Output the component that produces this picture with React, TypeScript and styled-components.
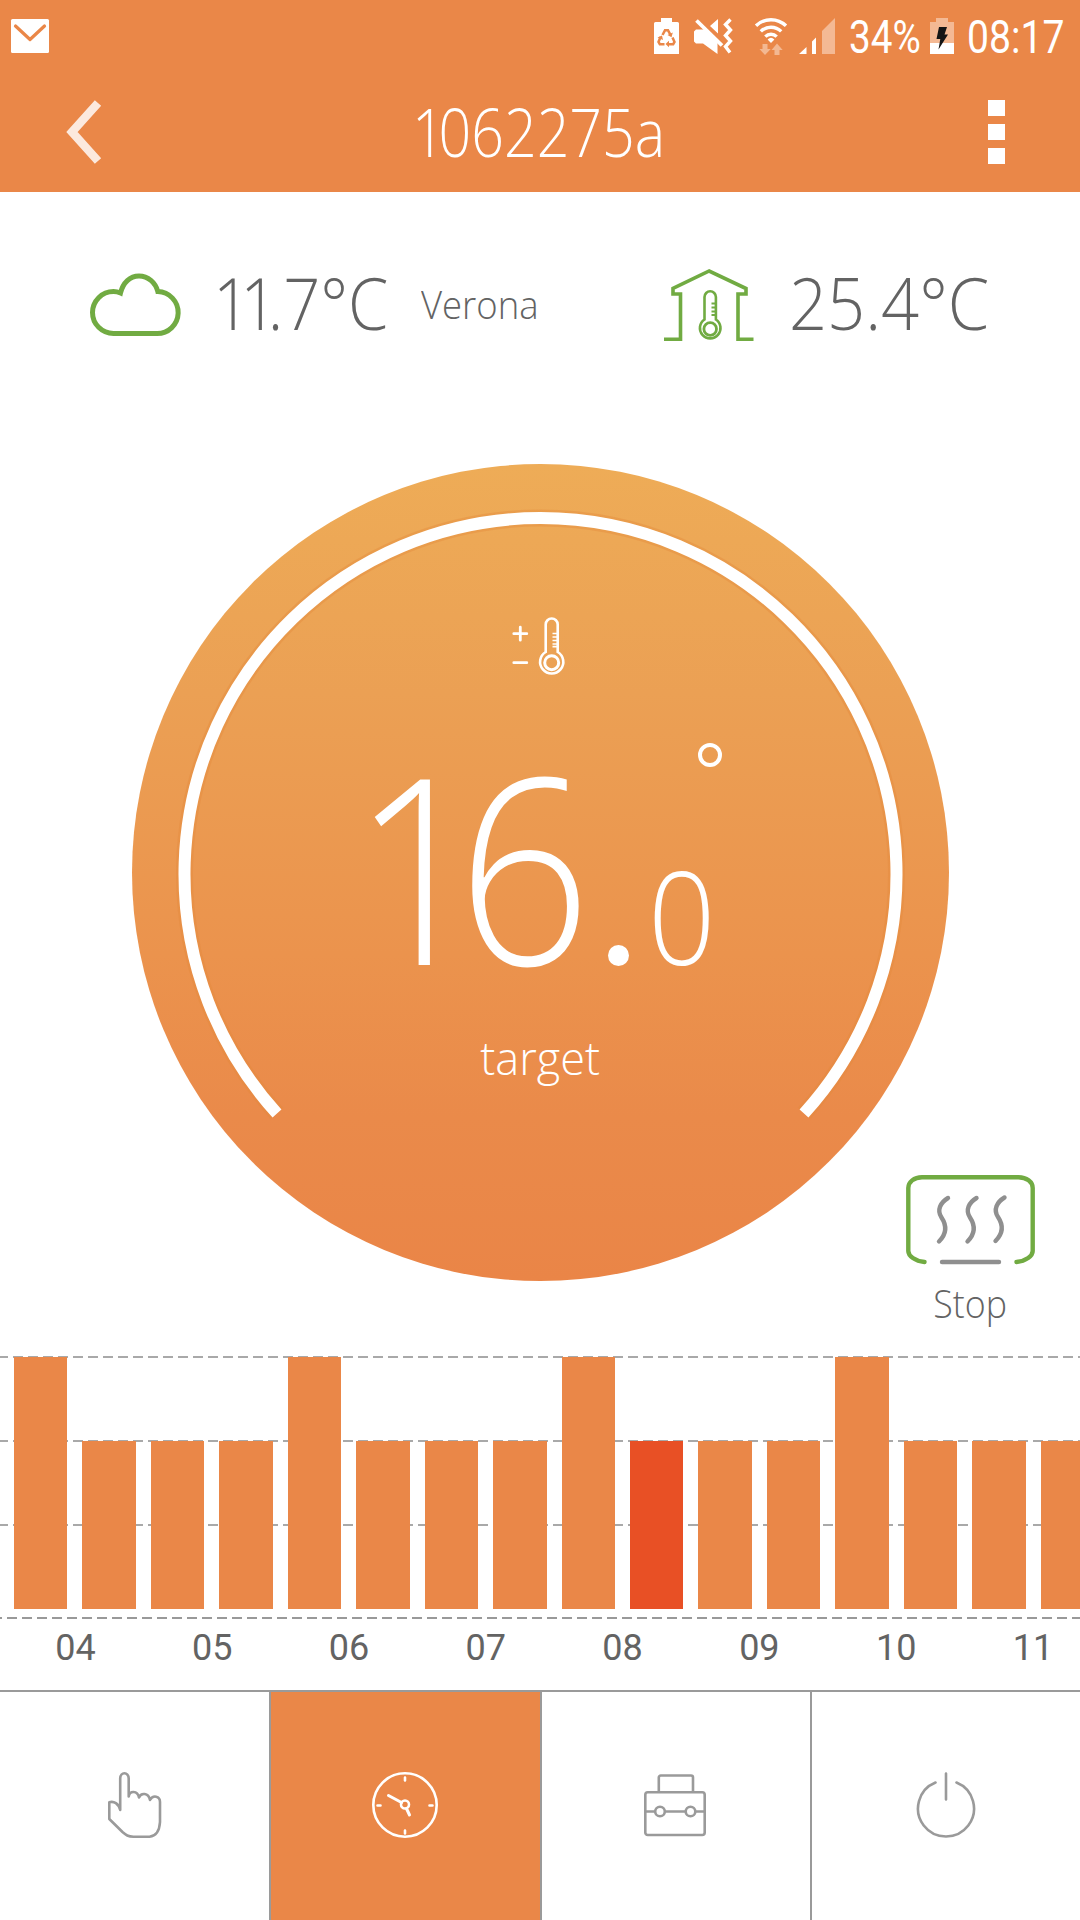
import React from "react";
import styled, { createGlobalStyle, css } from "styled-components";

const ORANGE = "#ea8748";
const RED = "#e85025";
const GREEN = "#71ab42";
const GREY = "#9a9a9a";
const INK = "#636363";

const Global = createGlobalStyle`
  *, *::before, *::after { box-sizing: border-box; }
  html, body { margin: 0; background: #fff; }
  button { border: 0; padding: 0; background: none; font: inherit; color: inherit; }
  svg { display: block; overflow: visible; }
`;

const Screen = styled.main`
  width: 1080px;
  height: 1920px;
  display: flex;
  flex-direction: column;
  overflow: hidden;
  background: #fff;
  color: ${INK};
  font-family: "Open Sans", "Noto Sans", sans-serif;
  font-weight: 300;
`;

const Text = styled.span<{ $size: number; $stretch?: number; $origin?: string }>`
  display: block;
  white-space: nowrap;
  font-size: ${(p) => p.$size}px;
  line-height: 1;
  transform: scaleX(${(p) => p.$stretch ?? 1});
  transform-origin: ${(p) => p.$origin ?? "left"} center;
`;

const One = styled.span<{ $pull?: number }>`
  letter-spacing: -${(p) => p.$pull ?? 0.15}em;
`;

/* ---------- header ---------- */

const Header = styled.header`
  height: 192px;
  flex: none;
  background: ${ORANGE};
  color: #fff;
`;

const StatusBar = styled.div`
  height: 72px;
  display: flex;
  align-items: center;
  padding: 0 15px 0 11px;
  font-family: Roboto, sans-serif;
  font-weight: 400;
`;

const StatusIcons = styled.div`
  flex: 1;
  display: flex;
  justify-content: flex-end;
  align-items: center;
`;

const StatusSlot = styled.div<{ $w: number; $gap: number; $drop?: number }>`
  width: ${(p) => p.$w}px;
  margin-left: ${(p) => p.$gap}px;
  padding-top: ${(p) => p.$drop ?? 0}px;
  flex: none;
`;

const TitleBar = styled.div`
  height: 120px;
  display: grid;
  grid-template-columns: 200px 1fr 200px;
  align-items: center;
  padding-bottom: 3px;
`;

const BackButton = styled.button`
  justify-self: start;
  margin: 3px 0 0 67px;
`;

const Title = styled.h1`
  margin: 3px 3px 0 0;
  font-weight: 300;
  display: flex;
  justify-content: center;
`;

const MenuButton = styled.button`
  justify-self: end;
  margin: 3px 75px 0 0;
  display: grid;
  gap: 8px;
`;

const MenuDot = styled.i`
  width: 17px;
  height: 16px;
  background: #fff;
`;

/* ---------- weather ---------- */

const Weather = styled.section`
  height: 226px;
  flex: none;
  display: flex;
  align-items: center;
  padding: 0 94px 0 90px;
`;

const Reading = styled.div<{ $w: number; $left: number; $lift?: number }>`
  width: ${(p) => p.$w}px;
  margin-left: ${(p) => p.$left}px;
  padding-bottom: ${(p) => p.$lift ?? 0}px;
  flex: none;
`;

/* ---------- dial ---------- */

const DialArea = styled.section`
  position: relative;
  height: 927px;
  flex: none;
  padding-top: 46px;
  display: flex;
  justify-content: center;
`;

const Dial = styled.div`
  position: relative;
  width: 817px;
  height: 817px;
  border-radius: 50%;
  background: linear-gradient(#eeac57 0%, #eba054 28%, #eb934d 60%, #ea8a4a 80%, #ea8547 100%);
  color: #fff;
  display: flex;
  flex-direction: column;
  align-items: center;
`;

const Ring = styled.svg`
  position: absolute;
  inset: 0;
`;

const ModeIcon = styled.div`
  margin-top: 152px;
  height: 60px;
  width: 54px;
`;

const Target = styled.div`
  margin-top: 60px;
  width: 336px;
  height: 262px;
  display: flex;
  align-items: flex-end;
`;

const Whole = styled.div`
  width: 256px;
  margin: 0 0 4px -20px;
  flex: none;
`;

const Point = styled.i`
  width: 21px;
  height: 21px;
  margin: 0 19px 32px 0;
  border-radius: 50%;
  background: #fff;
  flex: none;
`;

const Fraction = styled.div`
  height: 100%;
  padding-bottom: 18px;
  display: flex;
  flex-direction: column;
  justify-content: space-between;
`;

const Degree = styled.i`
  width: 24px;
  height: 24px;
  margin: 7px 0 0 50px;
  border: 4px solid #fff;
  border-radius: 50%;
`;

const Caption = styled.div`
  margin-top: 36px;
`;

const StopButton = styled.button`
  position: absolute;
  right: 45px;
  top: 757px;
  width: 129px;
  display: flex;
  flex-direction: column;
  align-items: center;
  gap: 20px;
`;

/* ---------- schedule chart ---------- */

const Schedule = styled.section`
  height: 345px;
  flex: none;
`;

const dashes = css`
  background-image:
    repeating-linear-gradient(90deg, #a9a9a9 0 10px, transparent 10px 15px),
    repeating-linear-gradient(90deg, #a9a9a9 0 10px, transparent 10px 15px),
    repeating-linear-gradient(90deg, #a9a9a9 0 10px, transparent 10px 15px),
    repeating-linear-gradient(90deg, #999 0 10px, transparent 10px 15px);
  background-repeat: no-repeat;
  background-size: 1110px 2px;
  background-position: -2px 11px, -2px 95px, -2px 179px, -8px 272px;
`;

const Plot = styled.div`
  ${dashes}
  height: 276px;
  padding: 12px 0 12px 14px;
  display: flex;
  align-items: flex-end;
  gap: 15px;
  overflow: hidden;
`;

const Bar = styled.div<{ $level: number; $now?: boolean }>`
  flex: none;
  width: 53.45px;
  height: ${(p) => p.$level * 84}px;
  background: ${(p) => (p.$now ? RED : ORANGE)};
`;

const Hours = styled.div`
  display: flex;
  padding-left: 7px;
  font-family: Roboto, sans-serif;
  font-weight: 400;
  font-size: 36px;
  line-height: 54px;
  overflow: hidden;
`;

const Hour = styled.span`
  flex: none;
  width: 136.8px;
  text-align: center;
`;

/* ---------- bottom navigation ---------- */

const Nav = styled.nav`
  flex: 1;
  display: grid;
  grid-template-columns: 271px 271px 270px 268px;
  border-top: 2px solid ${GREY};
`;

const Tab = styled.button<{ $active?: boolean; $nudge?: number }>`
  display: flex;
  justify-content: center;
  align-items: flex-start;
  padding: 80px ${(p) => p.$nudge ?? 0}px 0 0;
  background: ${(p) => (p.$active ? ORANGE : "#fff")};
  border-right: 2px solid ${GREY};
  &:last-child { border-right: 0; }
`;

/* ---------- drawings ---------- */

const MailIcon = () => (
  <svg width="38" height="34" viewBox="0 0 38 34">
    <rect width="38" height="34" rx="1.5" fill="#fff" />
    <path d="M4.5 7 19 20.5 33.5 7" fill="none" stroke={ORANGE} strokeWidth="3.2" strokeLinecap="round" strokeLinejoin="round" />
  </svg>
);

const BatterySaverIcon = () => (
  <svg width="25" height="36" viewBox="0 0 25 36">
    <path d="M7 0h11v4h5.500a1.500 1.500 0 0 1 1.500 1.500V36H0V5.500A1.500 1.500 0 0 1 1.500 4H7z" fill="#fff" />
    <g fill="none" stroke={ORANGE} strokeWidth="2.500">
      <path d="M8.500 17 11 12.300h3l2.500 4.500" />
      <path d="M18.500 19.500 20.500 24l-1.300 2.200H14" />
      <path d="M6.500 19 4.500 24l1.300 2.200H10.500" />
    </g>
    <path d="M18.800 14.500 17.500 19.200 13.500 17zM15 22.800v6.400l-3.500-3.200zM3.500 19.500 8 17.500 9 22z" fill={ORANGE} />
  </svg>
);

const MuteVibrateIcon = () => (
  <svg width="38" height="36" viewBox="0 0 38 36">
    <path d="M0 13.500 2 11.500H11L23.500 24V36L9 25.500H2L0 23.500zM24 1v14.500l-8-7.500z" fill="#fff" />
    <path d="M2.500 2.500 28 27.500" stroke="#fff" strokeWidth="3.800" />
    <path d="M36.500 1.500 31.500 6.500l5 5.500L31.500 17.500l5 5.500L31.500 28.500l4.500 6" fill="none" stroke="#fff" strokeWidth="3.400" />
  </svg>
);

const WifiIcon = () => (
  <svg width="32" height="37" viewBox="0 0 32 37">
    <g fill="none" stroke="#fff" strokeWidth="3.400">
      <path d="M1 7.800a21.500 21.500 0 0 1 30 0" />
      <path d="M5.800 13.400a14.500 14.500 0 0 1 20.400 0" />
      <path d="M10.300 18.600a8.200 8.200 0 0 1 11.400 0" />
    </g>
    <path d="M16 25l-3.400-3.600a5 5 0 0 1 6.800 0z" fill="#fff" />
    <path d="M7.500 26h5v5h3.200L10 37l-5.500-6h3zM19.500 37h5v-5h3.200L22 25.500 16.500 32h3z" fill="#f3b892" />
  </svg>
);

const SignalIcon = () => (
  <svg width="36" height="36" viewBox="0 0 36 36">
    <path d="M0 36 7.500 29v7zM13 23.500l4-4V36h-4z" fill="#fff" />
    <path d="M23 13 36 0v36H23z" fill="#f4b994" />
  </svg>
);

const ChargingIcon = () => (
  <svg width="24" height="36" viewBox="0 0 24 36">
    <path d="M6 0h12v4h6v21H0V4h6z" fill="#f4b994" />
    <path d="M0 25h24v11H0z" fill="#fff" />
    <path d="M9 9h8l-2.500 7.500h3.500L8.500 31.500l1.800-10.500H6.500z" fill="#151515" />
  </svg>
);

const BackIcon = () => (
  <svg width="35" height="64" viewBox="0 0 35 64">
    <path d="M31 3 5 32l26 29" fill="none" stroke="#fce9de" strokeWidth="8.500" />
  </svg>
);

const CloudIcon = () => (
  <svg width="90" height="63" viewBox="0 0 90 63" fill="none" stroke={GREEN} strokeWidth="5">
    <path d="M23.500 59.500A20.900 20.900 0 0 1 23.500 17.500Q27 17.500 30.500 19C33 8.500 40 2 49 2S65.500 8.500 67.800 17.500A20.900 20.900 0 0 1 66.500 59.500Z" />
  </svg>
);

const HouseIcon = () => (
  <svg width="90" height="72" viewBox="0 0 90 72" fill="none" stroke={GREEN} strokeWidth="3.600">
    <path d="M0 70.200H16.500V25H9V19.500L45.200 2 82 19.500V25H74V70.200H89.500" />
    <g strokeWidth="2.600">
      <path d="M40.500 50.500V28a5.700 5.700 0 0 1 11.400 0V50.500a10.300 10.300 0 1 1-11.400 0Z" />
      <circle cx="46.200" cy="60" r="6.300" strokeWidth="2.800" />
      <path d="M47.500 34.500h4M47.500 38.500h4M47.500 42.500h4M47.500 46h4" strokeWidth="1.800" />
    </g>
  </svg>
);

const AdjustIcon = () => (
  <svg width="54" height="60" viewBox="0 0 54 60" fill="none" stroke="#fff" strokeWidth="2.600">
    <path d="M.8 17.700h13M7.300 11.200v13M.8 46.700h13" strokeWidth="2.800" strokeLinecap="round" />
    <path d="M32.700 36V8.500a6 6 0 0 1 12 0V36a11.600 11.600 0 1 1-12 0Z" />
    <circle cx="38.700" cy="46.700" r="7" strokeWidth="3" />
    <path d="M39.500 17.500h5M39.500 21h5M39.500 24.500h5M39.500 28h5M39.500 30.700h5" strokeWidth="1.700" />
  </svg>
);

const HeatIcon = () => (
  <svg width="129" height="89" viewBox="0 0 129 89" fill="none" strokeWidth="4.400" strokeLinecap="round">
    <path d="M18.500 87C9 86 2.300 81 2.300 76V13C2.300 7 8 2.200 16 2.200h96.500C120.500 2.200 126.700 7 126.700 13v63c0 5-6.700 10-16.200 11" stroke={GREEN} />
    <g stroke="#8f8f8f">
      <path d="M36 87h57" />
      <path d="M42 23C34.500 27.500 30.500 35 35.500 42.500S41 58.500 33 66.500" />
      <path d="M70.500 23C63 27.500 59 35 64 42.500S69.500 58.500 61.500 66.500" />
      <path d="M98.500 22.500C91 27 87 34.500 92 42S97.500 58 89.500 66" />
    </g>
  </svg>
);

const HandIcon = () => (
  <svg width="54" height="66" viewBox="0 0 54 66" fill="none" stroke={GREY} strokeWidth="2.600" strokeLinejoin="round">
    <path d="M12.200 38V6.500C12.200-.5 20.700-.5 20.700 6.500V24.500C21.500 18.500 29.500 18 31 25.500 33 20.500 40.500 20.500 42 28 45 22.500 52 24 52 30V50C51.500 58.500 48.500 64 41.500 64.700H25.500C20 64.700 18 63 14.500 60L1.300 47V30.200C6 28.800 10.500 31.500 12.200 38Z" />
  </svg>
);

const ClockIcon = () => (
  <svg width="66" height="66" viewBox="0 0 66 66" fill="none" stroke="#fff" strokeWidth="2.600" strokeLinecap="round">
    <circle cx="33" cy="33" r="31.700" />
    <path d="M33 5.500v3M33 58.500v3M5.500 33.500h3M57.500 33.500h3" />
    <circle cx="33" cy="32.500" r="4" />
    <path d="M29.500 30.500 16.500 23.500M34.500 36.500 37.500 43" strokeWidth="3" />
  </svg>
);

const ToolboxIcon = () => (
  <svg width="62" height="64" viewBox="0 -1 62 64" fill="none" stroke={GREY} strokeWidth="2.600">
    <path d="M14.800 19V4.500a2 2 0 0 1 2-2H47a2 2 0 0 1 2 2V19" />
    <rect x="1.300" y="19.300" width="59.400" height="42.700" rx="2.500" />
    <path d="M1.300 38.500h9.700M21 38.500h20.500M51.500 38.500h9" />
    <circle cx="16" cy="38.500" r="4.800" />
    <circle cx="46.500" cy="38.500" r="4.800" />
  </svg>
);

const PowerIcon = () => (
  <svg width="58" height="66" viewBox="0 0 58 66" fill="none" stroke={GREY} strokeWidth="2.600" strokeLinecap="round">
    <path d="M18.500 10.500A28 28 0 1 0 39.500 10.500M29 1.500V27.500" />
  </svg>
);

const LEVELS = [3, 2, 2, 2, 3, 2, 2, 2, 3, 2, 2, 2, 3, 2, 2, 2];
const CURRENT = 9;
const HOURS = ["04", "05", "06", "07", "08", "09", "10", "11"];
const ARC = "M145 649.500A356 356 0 1 1 672 649.500";

export default function App() {
  return (
    <>
      <Global />
      <Screen>
        <Header>
          <StatusBar>
            <MailIcon />
            <StatusIcons>
              <StatusSlot $w={25} $gap={0}><BatterySaverIcon /></StatusSlot>
              <StatusSlot $w={38} $gap={15}><MuteVibrateIcon /></StatusSlot>
              <StatusSlot $w={32} $gap={23}><WifiIcon /></StatusSlot>
              <StatusSlot $w={36} $gap={12}><SignalIcon /></StatusSlot>
              <StatusSlot $w={72} $gap={14} $drop={2}><Text $size={46} $stretch={0.84}>34%</Text></StatusSlot>
              <StatusSlot $w={24} $gap={9}><ChargingIcon /></StatusSlot>
              <StatusSlot $w={98} $gap={13} $drop={2}><Text $size={46} $stretch={0.85}>08:17</Text></StatusSlot>
            </StatusIcons>
          </StatusBar>
          <TitleBar>
            <BackButton aria-label="Back"><BackIcon /></BackButton>
            <Title>
              <Text $size={65.5} $stretch={0.875} $origin="center"><One $pull={0.11}>1</One>062275a</Text>
            </Title>
            <MenuButton aria-label="Menu"><MenuDot /><MenuDot /><MenuDot /></MenuButton>
          </TitleBar>
        </Header>

        <Weather>
          <CloudIcon />
          <Reading $w={178} $left={33} $lift={5}>
            <Text $size={71} $stretch={0.915}><One>1</One><One>1</One>.7°C</Text>
          </Reading>
          <Reading $w={120} $left={30} $lift={3}>
            <Text $size={38} $stretch={0.96}>Verona</Text>
          </Reading>
          <Reading $w={90} $left={123}><HouseIcon /></Reading>
          <Reading $w={200} $left={35} $lift={5}>
            <Text $size={71} $stretch={0.94}>25.4°C</Text>
          </Reading>
        </Weather>

        <DialArea>
          <Dial>
            <Ring width="817" height="817" viewBox="0 0 817 817" fill="none">
              <path d={ARC} stroke="#e48a3c" strokeOpacity="0.4" strokeWidth="17" />
              <path d={ARC} stroke="#fff" strokeWidth="12" />
            </Ring>
            <ModeIcon><AdjustIcon /></ModeIcon>
            <Target>
              <Whole><Text $size={260} $stretch={0.9}><One $pull={0.12}>1</One>6</Text></Whole>
              <Point />
              <Fraction>
                <Degree />
                <Text $size={130} $stretch={0.91}>0</Text>
              </Fraction>
            </Target>
            <Caption><Text $size={46} $stretch={0.98} $origin="center">target</Text></Caption>
          </Dial>
          <StopButton>
            <HeatIcon />
            <Text $size={38} $stretch={0.94} $origin="center">Stop</Text>
          </StopButton>
        </DialArea>

        <Schedule>
          <Plot>
            {LEVELS.map((level, i) => <Bar key={i} $level={level} $now={i === CURRENT} />)}
          </Plot>
          <Hours>
            {HOURS.map((h) => <Hour key={h}>{h}</Hour>)}
          </Hours>
        </Schedule>

        <Nav>
          <Tab aria-label="Manual"><HandIcon /></Tab>
          <Tab aria-label="Schedule" $active $nudge={2}><ClockIcon /></Tab>
          <Tab aria-label="Settings" $nudge={2}><ToolboxIcon /></Tab>
          <Tab aria-label="Power"><PowerIcon /></Tab>
        </Nav>
      </Screen>
    </>
  );
}
